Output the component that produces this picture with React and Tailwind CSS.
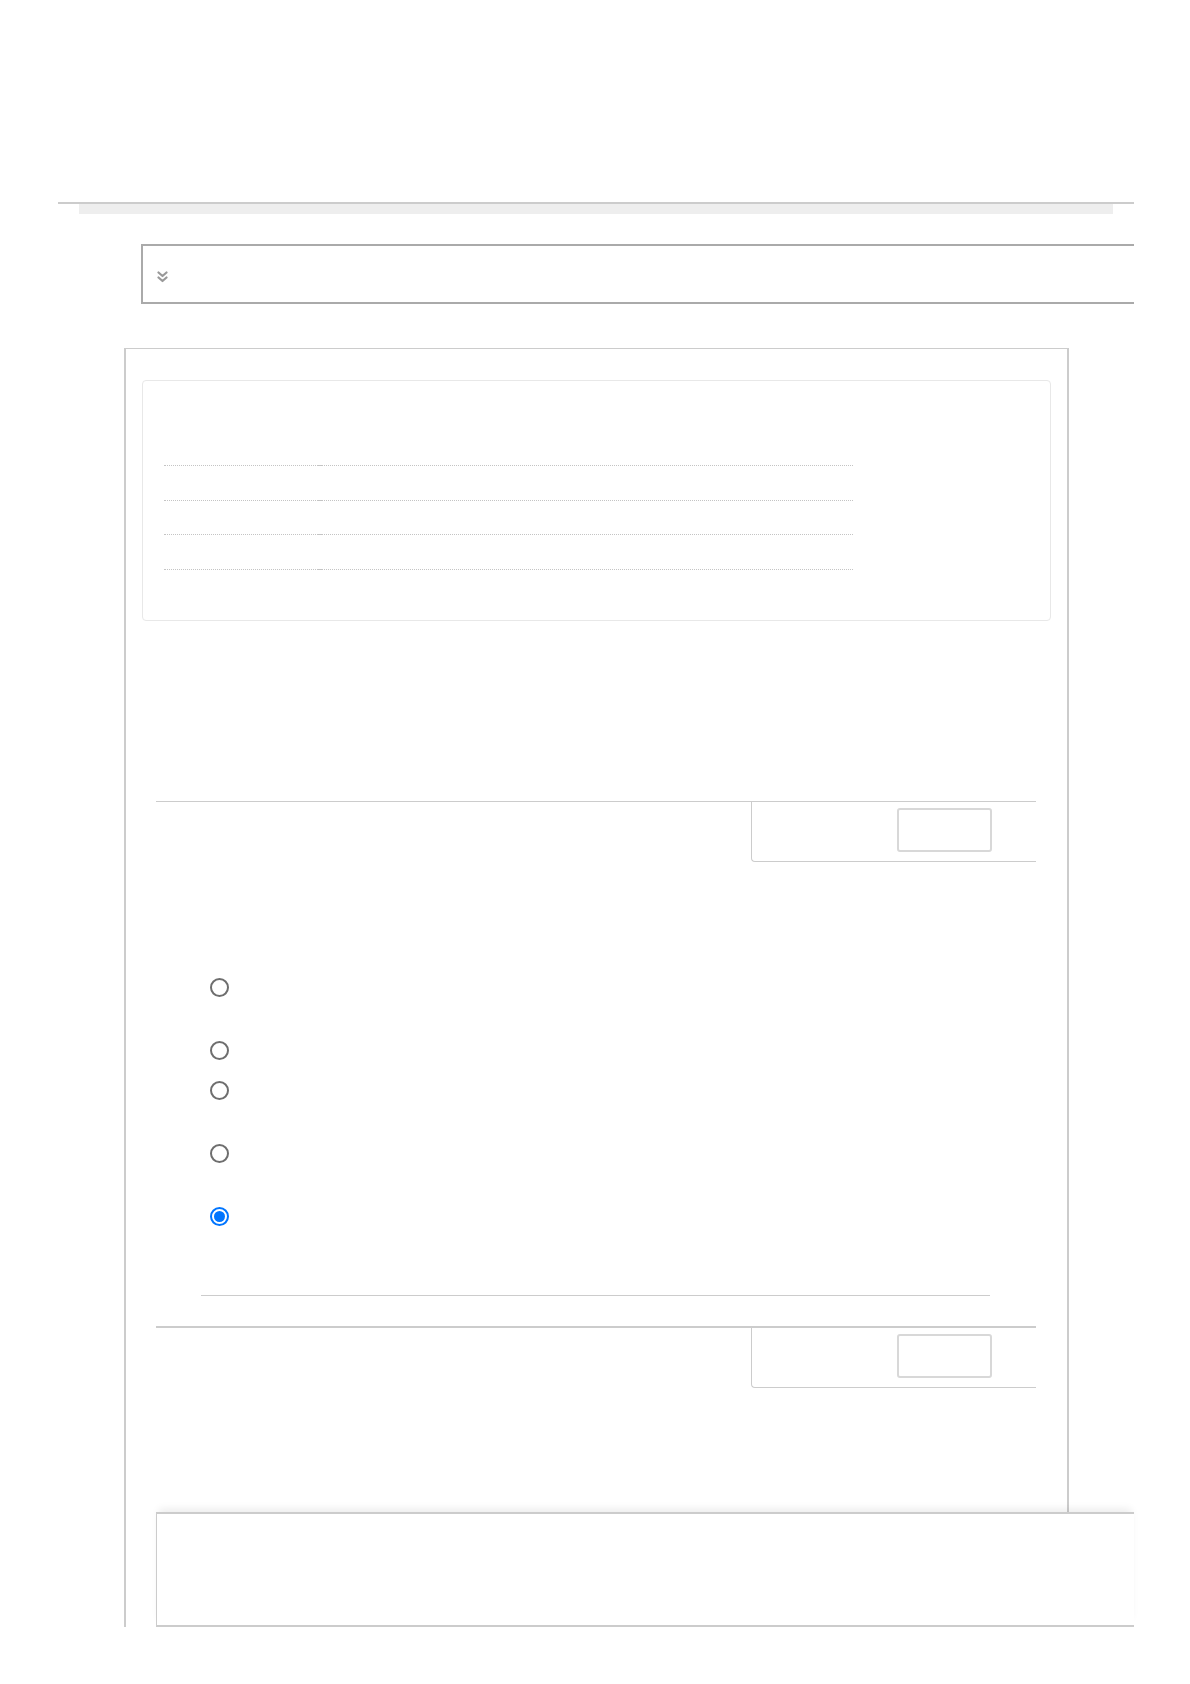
const rows = [35, 35, 34, 35]

// Dotted row with the small solid mark where the two cells meet
const DottedRow = ({ h }) => (
  <div className="flex items-end pl-[21px]" style={{ height: h }}>
    <div className="w-[154px] border-b border-dotted border-[#c4c4c4]" />
    <div className="w-[4px] border-b border-solid border-[#c4c4c4]" />
    <div className="w-[531px] border-b border-dotted border-[#c4c4c4]" />
  </div>
)

const Radio = ({ checked }) =>
  checked ? (
    <span className="flex h-[19px] w-[19px] items-center justify-center rounded-full border-2 border-[#0075ff] bg-white">
      <span className="h-[11px] w-[11px] rounded-full bg-[#0075ff]" />
    </span>
  ) : (
    <span className="block h-[19px] w-[19px] rounded-full border-2 border-[#6e6e6e] bg-white" />
  )

const SectionHeader = ({ thick }) => (
  <div className={`ml-[30px] w-[880px] border-t-[#cccccc] ${thick ? 'border-t-2' : 'border-t'}`}>
    <div className="flex justify-end">
      <div className="h-[60px] w-[285px] rounded-bl-[4px] border-b border-l border-[#cccccc] pl-[145px] pt-[6px]">
        <div className="h-[44px] w-[95px] rounded-[3px] border-2 border-[#d8d8d8]" />
      </div>
    </div>
  </div>
)

export default function App() {
  return (
    <div className="min-h-[1684px] w-[1190px] bg-white" style={{ fontFamily: '"Liberation Sans", Arial, sans-serif' }}>
      <div className="h-[202px]" />

      {/* Header rule and grey strip */}
      <div className="ml-[58px] w-[1076px] border-t-2 border-[#cccccc]" />
      <div className="ml-[79px] h-[10px] w-[1034px] bg-[#eeeeee]" />

      {/* Collapsed toolbar */}
      <div className="ml-[141px] mt-[30px] flex h-[60px] w-[993px] items-center border-2 border-r-0 border-[#aaaaaa] pl-[14px] pt-[6px]">
        <svg width="11" height="12" viewBox="0 0 11 12" fill="none" stroke="#999999" strokeWidth="2.2" strokeLinecap="round" strokeLinejoin="round">
          <path d="M1.5 1.5l4 3.5 4-3.5" />
          <path d="M1.5 6.5l4 3.5 4-3.5" />
        </svg>
      </div>

      {/* Main panel */}
      <div className="ml-[124px] mt-[44px] w-[945px] border-x-2 border-t border-[#cccccc]">
        <div className="mx-[16px] mt-[31px] h-[241px] rounded-[4px] border border-[#e8e8e8]">
          <div className="h-[50px]" />
          {rows.map((h, i) => (
            <DottedRow key={i} h={h} />
          ))}
        </div>

        <div className="mt-[180px]">
          <SectionHeader />
        </div>

        <div className="ml-[84px] mt-[116px] flex flex-col">
          <Radio />
          <div className="mt-[44px]"><Radio /></div>
          <div className="mt-[21px]"><Radio /></div>
          <div className="mt-[44px]"><Radio /></div>
          <div className="mt-[44px]"><Radio checked /></div>
        </div>

        <div className="ml-[75px] mt-[69px] w-[789px] border-t border-[#cccccc]" />

        <div className="mt-[30px]">
          <SectionHeader thick />
        </div>

        {/* Footer box, runs past the panel's right edge */}
        <div className="relative ml-[30px] mt-[124px] h-[115px] w-[978px] border-y-2 border-l border-[#cccccc] bg-white shadow-[0_-6px_8px_-3px_rgba(0,0,0,0.08)]" />
      </div>
    </div>
  )
}
